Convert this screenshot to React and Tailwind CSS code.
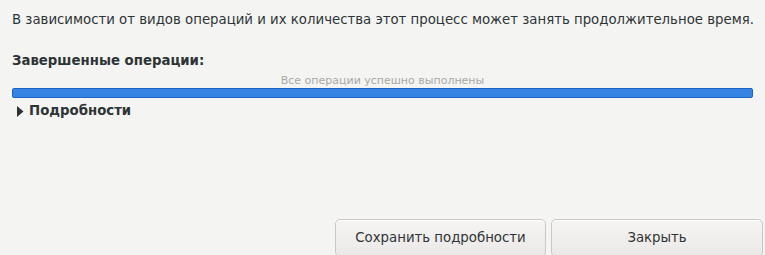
import React from "react";

export default function App() {
  return (
    <div
      className="w-[765px] h-[255px] overflow-hidden bg-[#f4f5f3] text-[#2e3436] flex flex-col"
      style={{ fontFamily: '"DejaVu Sans", sans-serif' }}
    >
      <div className="px-3 pt-[12px] flex-1 flex flex-col">
        <p className="text-[13.3px] leading-[16px] whitespace-nowrap">
          В зависимости от видов операций и их количества этот процесс может занять продолжительное время.
        </p>
        <p className="mt-[25px] text-[13.3px] leading-[16px] font-bold">Завершенные операции:</p>
        <div className="mt-[5px] text-center text-[11px] leading-[13px] text-[#a7a9a7]">
          Все операции успешно выполнены
        </div>
        <div className="mt-px h-[10px] rounded-[2px] border border-[#1c63c4] bg-[#3584e4]" />
        <div className="mt-[5px] flex items-center gap-[5px] pl-[5px]">
          <svg width="7" height="11" viewBox="0 0 7 11">
            <path d="M0 0 L6.5 5.5 L0 11 Z" fill="#2e3436" />
          </svg>
          <span className="text-[13.3px] leading-[16px] font-bold">Подробности</span>
        </div>
      </div>
      <div className="flex justify-end gap-[5px] pr-[2px] h-[36px]">
        <button className="w-[211px] h-[38px] rounded-[5px] border border-[#cdc7c2] bg-gradient-to-b from-[#f5f4f2] to-[#ebe9e7] text-[13.3px] text-[#2e3436] shadow-[inset_0_1px_white]">
          Сохранить подробности
        </button>
        <button className="w-[212px] h-[38px] rounded-[5px] border border-[#cdc7c2] bg-gradient-to-b from-[#f5f4f2] to-[#ebe9e7] text-[13.3px] text-[#2e3436] shadow-[inset_0_1px_white]">
          Закрыть
        </button>
      </div>
    </div>
  );
}
